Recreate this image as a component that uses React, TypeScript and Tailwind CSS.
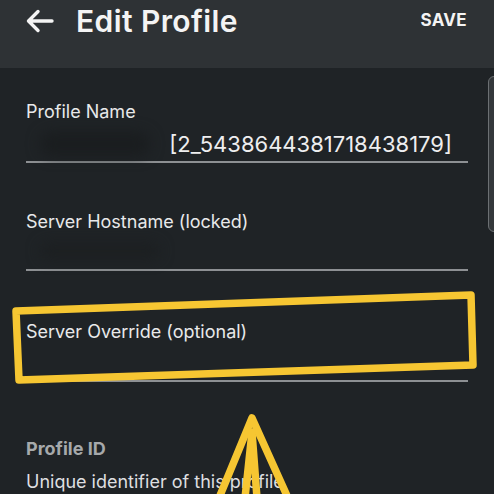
import { ReactNode } from 'react';

const font = { fontFamily: 'Inter, "Noto Sans", sans-serif' };

function Field({ label, children, gapClass }: { label: string; children: ReactNode; gapClass: string }) {
  return (
    <div className={gapClass}>
      <div className="text-[18px] leading-[22px] text-[#e8e9ea]">{label}</div>
      {children}
      <div className="h-[2px] bg-[#8d9093]" />
    </div>
  );
}

export default function App() {
  return (
    <div className="relative w-[494px] h-[494px] overflow-hidden bg-[#1f2326]" style={font}>
      <header className="h-[68px] bg-[#2e3235]">
        <div className="flex items-center h-[42px] pl-[26px] pr-[27px]">
          <svg width="28" height="24" viewBox="0 0 28 24" fill="none" stroke="#f4f4f4" strokeWidth="3.4" strokeLinecap="round" strokeLinejoin="round">
            <path d="M26 12H3M12 2.5L2.5 12 12 21.5" />
          </svg>
          <h1 className="ml-[22px] text-[30px] font-semibold text-[#f4f4f4] tracking-[0.4px]">Edit Profile</h1>
          <span className="ml-auto text-[17px] font-bold text-[#f4f4f4] tracking-[0.3px]">SAVE</span>
        </div>
      </header>

      <main className="flex flex-col px-[26px] pt-[33px]">
        <Field label="Profile Name" gapClass="">
          <div className="flex items-center h-[28px] mt-[7px] mb-[3px] pr-[16px]">
            <div className="w-[110px] h-[24px] ml-[14px] rounded-full bg-[#1a1d1f] blur-[7px]" />
            <span className="ml-auto text-[22px] leading-[28px] text-[#eeeeef]">[2_5438644381718438179]</span>
          </div>
        </Field>

        <Field label="Server Hostname (locked)" gapClass="mt-[48px]">
          <div className="h-[36px] flex items-center">
            <div className="w-[120px] h-[16px] ml-[14px] rounded-full bg-[#1c1f21] blur-[7px]" />
          </div>
        </Field>

        <Field label="Server Override (optional)" gapClass="mt-[50px]">
          <div className="h-[37px]" />
        </Field>

        <div className="mt-[56px] text-[18px] leading-[22px] font-bold text-[#a6a9ab]">Profile ID</div>
        <div className="mt-[10px] text-[18px] leading-[24px] text-[#dedfe0]">Unique identifier of this profile</div>
      </main>

      <div className="absolute left-[488px] top-[76px] w-[14px] h-[156px] rounded-[6px] bg-[#34383b] border border-[#6c7073]" />

      <svg className="absolute left-0 top-0" width="494" height="494" viewBox="0 0 494 494" fill="none" stroke="#f6c632" strokeWidth="7.5" strokeLinecap="round" strokeLinejoin="round">
        <path d="M16 311 L471 295 L473 365 L19 380 Z" />
        <path d="M219 498 L252 418 L288 498" />
        <path d="M245 498 L252 432 L257 498" />
      </svg>
    </div>
  );
}
